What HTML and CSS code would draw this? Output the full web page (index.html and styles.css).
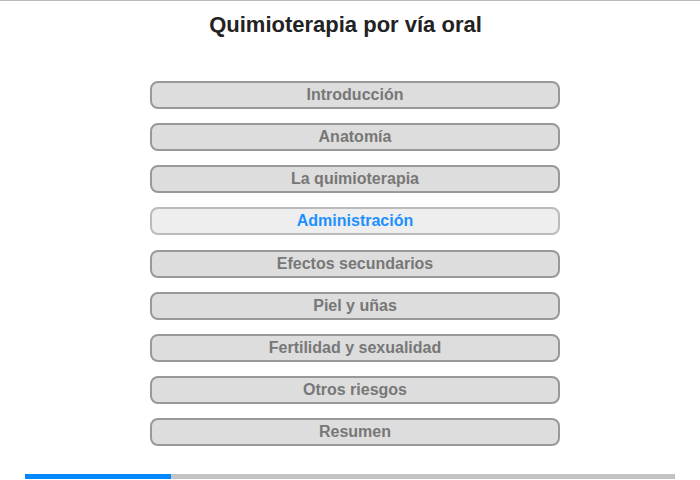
FILE: index.html
```html
<!DOCTYPE html>
<html lang="es">
<head>
<meta charset="utf-8">
<title>Quimioterapia por vía oral</title>
<link rel="stylesheet" href="styles.css">
</head>
<body>
<div class="page">
  <h1 class="title">Quimioterapia por vía oral</h1>
  <nav class="menu">
    <div class="item">Introducción</div>
    <div class="item">Anatomía</div>
    <div class="item">La quimioterapia</div>
    <div class="item active">Administración</div>
    <div class="item">Efectos secundarios</div>
    <div class="item">Piel y uñas</div>
    <div class="item">Fertilidad y sexualidad</div>
    <div class="item">Otros riesgos</div>
    <div class="item">Resumen</div>
  </nav>
  <div class="progress"><div class="progress-fill" style="width:146px"></div></div>
</div>
</body>
</html>
```
FILE: styles.css
```css
html, body {
  margin: 0;
  padding: 0;
  background: #fff;
}
.page {
  width: 700px;
  height: 480px;
  box-sizing: border-box;
  border-top: 1px solid #b9b9b9;
  font-family: "Liberation Sans", Arial, sans-serif;
  display: flex;
  flex-direction: column;
}
.title {
  margin: 11px 0 0 0;
  padding-right: 9px;
  font-size: 22px;
  line-height: 26px;
  font-weight: bold;
  color: #222;
  text-align: center;
}
.menu {
  margin: 43px 0 0 150px;
  width: 410px;
  display: flex;
  flex-direction: column;
  gap: 14.14px;
}
.item {
  box-sizing: border-box;
  height: 28px;
  border: 2px solid #999;
  border-radius: 8px;
  background: #dddddd;
  color: #777;
  font-size: 16px;
  font-weight: bold;
  line-height: 23px;
  text-align: center;
}
.item.active {
  background: #eeeeee;
  border-color: #bbb;
  color: #1e90ff;
}
.progress {
  margin: 28px 0 0 25px;
  width: 650px;
  height: 5px;
  background: #c3c3c3;
}
.progress-fill {
  height: 100%;
  background: #0088ff;
}
```
